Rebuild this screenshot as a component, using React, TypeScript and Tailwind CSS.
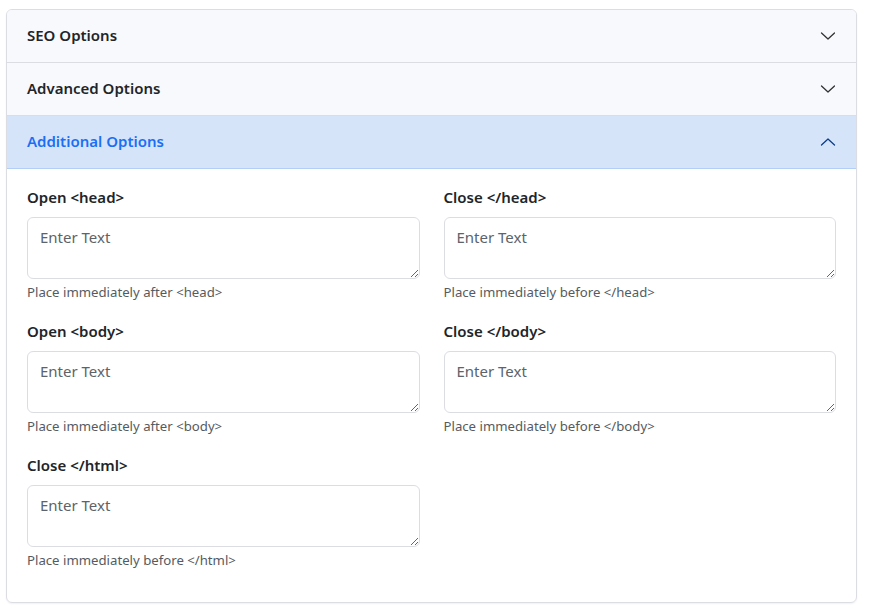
import React, { useState } from 'react';

const font = { fontFamily: '"Noto Sans", "Open Sans", sans-serif' };

const Chevron = ({ up }: { up?: boolean }) => (
  <svg width="16" height="16" viewBox="0 0 16 16" fill="none" stroke="currentColor" strokeWidth={1.3} strokeLinecap="round" strokeLinejoin="round">
    {up ? <path d="M1.5 11l6.5-6 6.5 6" /> : <path d="M1.5 5l6.5 6 6.5-6" />}
  </svg>
);

const fields = [
  { label: 'Open <head>', help: 'Place immediately after <head>' },
  { label: 'Close </head>', help: 'Place immediately before </head>' },
  { label: 'Open <body>', help: 'Place immediately after <body>' },
  { label: 'Close </body>', help: 'Place immediately before </body>' },
  { label: 'Close </html>', help: 'Place immediately before </html>' },
];

const Header = ({ title, open, onClick }: { title: string; open: boolean; onClick: () => void }) => (
  <button
    onClick={onClick}
    className={`w-full h-[53px] flex items-center justify-between pl-5 pr-5 pb-[1px] text-[15px] font-semibold text-left ${
      open ? 'bg-[#d6e4fa] text-[#1a6ff5] border-b border-[#b3cff8]' : 'bg-[#f8f9fd] text-[#212529] border-b border-[#dcdde3]'
    }`}
  >
    <span>{title}</span>
    <span className={open ? 'text-[#0b3d8a]' : 'text-[#333]'}>
      <Chevron up={open} />
    </span>
  </button>
);

export default function App() {
  const [open, setOpen] = useState<string | null>('additional');
  const toggle = (k: string) => setOpen(open === k ? null : k);

  return (
    <div className="bg-white min-h-screen pt-[9px] pl-[6px] pr-[12px]" style={font}>
      <div className="border border-[#dcdde3] rounded-[6px] overflow-hidden shadow-[0_1px_2px_rgba(0,0,0,0.06)]">
        <Header title="SEO Options" open={open === 'seo'} onClick={() => toggle('seo')} />
        <Header title="Advanced Options" open={open === 'advanced'} onClick={() => toggle('advanced')} />
        <Header title="Additional Options" open={open === 'additional'} onClick={() => toggle('additional')} />
        {open === 'additional' && (
          <div className="px-5 pt-[17px] pb-[33px] grid grid-cols-2 gap-x-6 gap-y-[19px]">
            {fields.map(f => (
              <div key={f.label}>
                <label className="block text-[15px] font-semibold text-[#212529] leading-[22px] mb-[9px]">{f.label}</label>
                <textarea
                  placeholder="Enter Text"
                  className="block w-full h-[62px] border border-[#dcdde3] rounded-[6px] px-3 py-[8px] text-[15px] leading-[22px] placeholder:text-[#5c636a] text-[#212529] outline-none"
                />
                <div className="text-[13.2px] text-[#555b61] leading-[18px] mt-[4px]">{f.help}</div>
              </div>
            ))}
          </div>
        )}
      </div>
    </div>
  );
}
